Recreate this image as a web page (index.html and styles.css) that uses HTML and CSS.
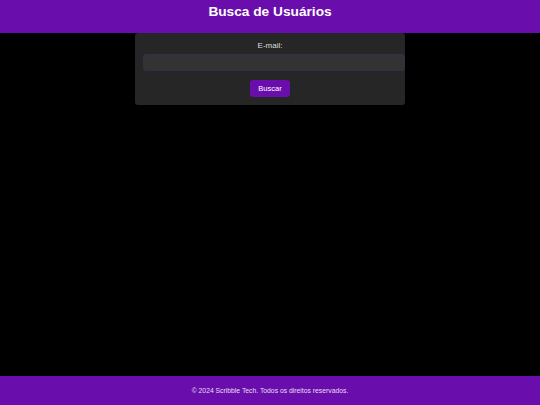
FILE: index.html
```html
<!DOCTYPE html>
<html lang="pt-BR">
<head>
<meta charset="utf-8">
<title>Busca de Usuários</title>
<link rel="stylesheet" href="styles.css">
</head>
<body>
<div class="page">
  <header class="header"><h1 class="title">Busca de Usuários</h1></header>
  <main class="main">
    <form class="card">
      <label class="label" for="email">E-mail:</label>
      <input class="input" id="email" type="email">
      <button class="button" type="button">Buscar</button>
    </form>
  </main>
  <footer class="footer">© 2024 Scribble Tech. Todos os direitos reservados.</footer>
</div>
</body>
</html>
```
FILE: styles.css
```css
* { box-sizing: border-box; }
html, body { margin: 0; padding: 0; background: #000; }
body { font-family: "Liberation Sans", Arial, sans-serif; color: #fff; }
.page { display: flex; flex-direction: column; height: 405px; }
.header { background: #6a0dad; height: 33px; display: flex; justify-content: center; padding-top: 4px; }
.title { margin: 0; font-size: 13.7px; font-weight: bold; line-height: 16px; color: #fff; }
.main { flex: 1; display: flex; justify-content: center; align-items: flex-start; }
.card { width: 270px; background: #262626; border-radius: 3px; padding: 8px 0 8px 8px; display: flex; flex-direction: column; align-items: center; }
.label { font-size: 8px; line-height: 10px; color: #ddd; margin-bottom: 3px; padding-right: 8px; }
.input { width: 262px; height: 17px; background: #333; border: 1px solid #3b2b4b; border-radius: 3px; margin: 0 0 9px 0; align-self: flex-start; }
.button { background: #6a0dad; color: #fff; border: none; border-radius: 3px; font-family: "Liberation Sans", Arial, sans-serif; font-size: 7.5px; font-weight: normal; width: 40px; height: 17px; padding: 0; margin-right: 8px; }
.footer { background: #6a0dad; height: 29px; display: flex; align-items: center; justify-content: center; font-size: 6.8px; color: #e8ddf0; }
```
